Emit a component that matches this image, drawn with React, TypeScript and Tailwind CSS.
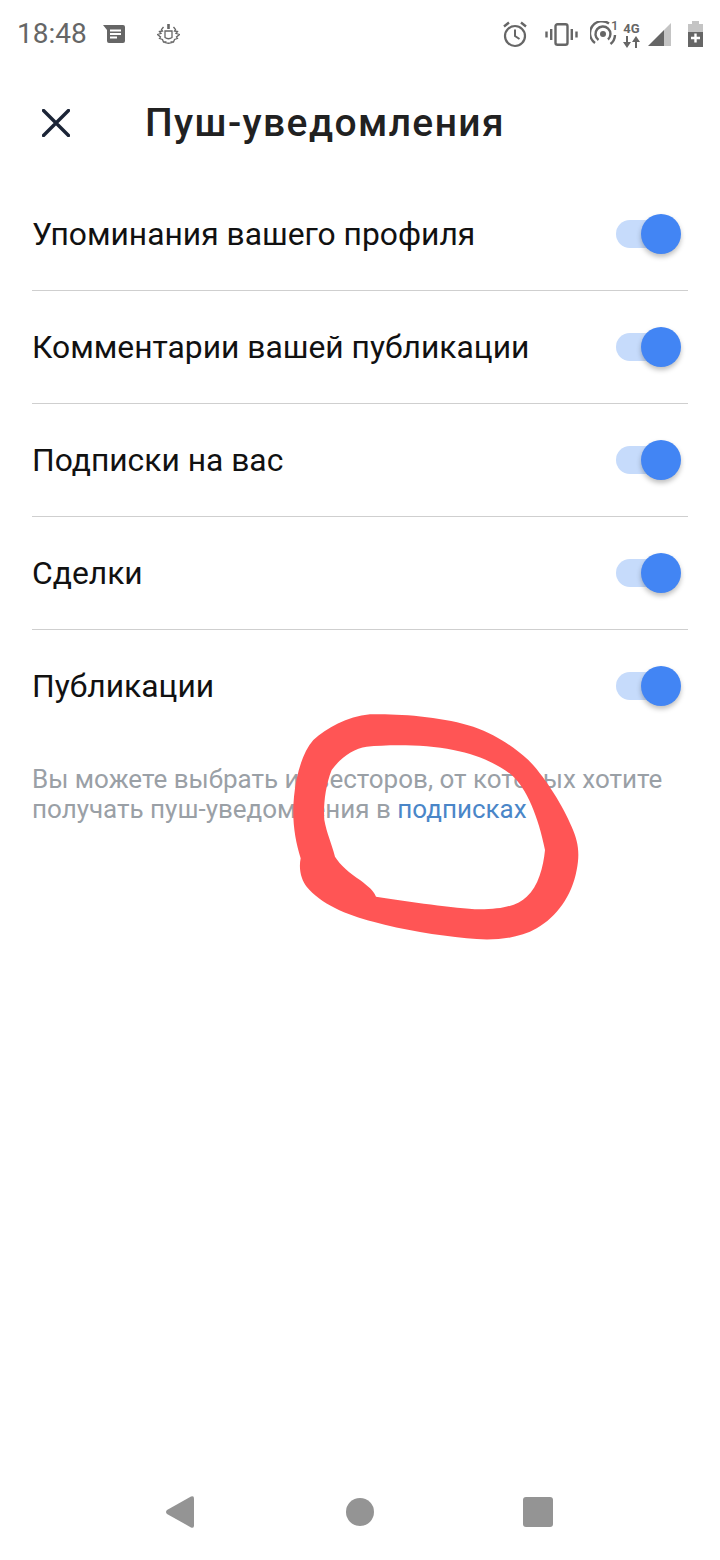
const rows = [
  'Упоминания вашего профиля',
  'Комментарии вашей публикации',
  'Подписки на вас',
  'Сделки',
  'Публикации',
];

const Toggle = () => (
  <div className="flex items-center">
    <div className="h-[28px] w-[50px] rounded-full bg-[#c6dbfb]" />
    <div className="-ml-[25px] h-[40px] w-[40px] rounded-full bg-[#4285f4] shadow-[0_3px_5px_rgba(0,0,0,0.25)]" />
  </div>
);

const StatusBar = () => (
  <div className="flex h-[68px] items-center pl-[17px] pr-[17px] text-[#666666]">
    <span className="w-[86px] text-[28px] leading-none">18:48</span>
    <svg className="-ml-[0px] h-[18px] w-[22px]" viewBox="0 0 22 18" fill="#666666">
      <path d="M0 0H20a2 2 0 0 1 2 2V16a2 2 0 0 1-2 2H6a2 2 0 0 1-2-2V5z" />
      <path d="M7 4.500h11v2H7zM7 8h11v2H7zM7 11.500h7v2H7z" fill="#ffffff" />
    </svg>
    <svg className="ml-[32px] h-[20px] w-[23px]" viewBox="0 0 23 20" fill="none" stroke="#666666" strokeWidth="1.300">
      <path d="M11.500 0v5" strokeWidth="2.600" />
      <path d="M8 7h7v6.500q-3.500 2.500-7 0z" />
      <path d="M6.500 3 4.500 5.500l1 1.500-3 .5 1.500 2-3.500 1 3 2.500-1 1.500 3 1 1 2.500h3" />
      <path d="M16.500 3l2 2.500-1 1.500 3 .5-1.500 2 3.500 1-3 2.500 1 1.500-3 1-1 2.500h-3" />
      <path d="M7.500 18.500q4 1.500 8 0" />
    </svg>
    <div className="ml-auto flex items-center">
      <svg className="h-[27px] w-[24px]" viewBox="0 0 24 27" fill="none" stroke="#666666" strokeWidth="2.200">
        <circle cx="12" cy="15" r="10" />
        <path d="M12 8.500v6.500l4.500 3" strokeWidth="2" />
        <path d="M1 5.500 6 1.500M23 5.500l-5-4" strokeWidth="2.400" />
      </svg>
      <svg className="ml-[18px] h-[23px] w-[33px]" viewBox="0 0 33 23" fill="none" stroke="#666666" strokeWidth="2.400">
        <rect x="10.500" y="1.200" width="12" height="20.600" rx="2" />
        <path d="M6.200 6v11M1.500 8.500v6M26.800 6v11M31.500 8.500v6" />
      </svg>
      <div className="ml-[12px] flex items-start">
        <svg className="h-[26px] w-[27px]" viewBox="0 0 27 26" fill="none" stroke="#666666" strokeWidth="2.400">
          <circle cx="13" cy="13" r="3" fill="#666666" stroke="none" />
          <path d="M8.500 19A7.500 7.500 0 1 1 18 18.500" />
          <path d="M19 2.500A12 12 0 0 0 5 22" />
          <path d="M25 14A12 12 0 0 1 20.500 23" />
        </svg>
        <span className="-ml-[6px] -mt-[3px] w-[6px] text-[13px] font-medium leading-[16px]">1</span>
      </div>
      <div className="ml-[6px] flex w-[17px] flex-col items-center">
        <span className="text-[13px] font-bold leading-[15px]">4G</span>
        <svg className="h-[12px] w-[17px]" viewBox="0 0 17 12" fill="#666666">
          <path d="M3 0h2v6h3l-4 6-4-6h3zM12 12h2V6h3l-4-6-4 6h3z" />
        </svg>
      </div>
      <svg className="ml-[8px] h-[23px] w-[23px]" viewBox="0 0 23 23">
        <path d="M0 23 16 7v16z" fill="#666666" />
        <path d="M16 7 23 0v23h-7z" fill="#c4c4c4" />
      </svg>
      <svg className="ml-[17px] h-[26px] w-[15px]" viewBox="0 0 15 26">
        <path d="M4 0h7v3h4v8H0V3h4z" fill="#c4c4c4" />
        <path d="M0 11h15v15H0z" fill="#666666" />
        <path d="M6.300 12.500h2.400v3.300H12v2.400H8.700v3.300H6.300v-3.300H3v-2.400h3.300z" fill="#ffffff" />
      </svg>
    </div>
  </div>
);

const App = () => {
  return (
    <div className="relative flex h-[1560px] w-[720px] flex-col overflow-hidden bg-white font-['Roboto',sans-serif]">
      <StatusBar />

      <header className="flex h-[110px] items-center pl-[42px]">
        <svg className="h-[28px] w-[28px]" viewBox="0 0 28 28" fill="none" stroke="#1b2436" strokeWidth="3.400" strokeLinecap="round">
          <path d="M1.500 1.500 26.500 26.500M26.500 1.500 1.500 26.500" />
        </svg>
        <h1 className="ml-[75px] text-[39px] font-medium leading-none tracking-[1.4px] text-[#212121]">Пуш-уведомления</h1>
      </header>

      <div className="px-[32px]">
        {rows.map((label, i) => (
          <div
            key={label}
            className={`flex h-[113px] items-center justify-between border-b pr-[7px] ${i < rows.length - 1 ? 'border-[#cfcfcf]' : 'border-transparent'}`}
          >
            <span className="pt-[2px] text-[31.8px] leading-none text-[#111111]">{label}</span>
            <Toggle />
          </div>
        ))}
      </div>

      <p className="px-[32px] pt-[21px] text-[26px] leading-[30px] text-[#9aa0a6]">
        Вы можете выбрать инвесторов, от которых хотите
        <br />
        получать пуш-уведомления в <span className="text-[#4a86c8]">подписках</span>
      </p>

      <nav className="mt-auto flex h-[96px] items-center pl-[166px] pr-[167px]">
        <svg className="h-[32px] w-[28px]" viewBox="0 0 28 32" fill="#949494">
          <path d="M1 14 25 .6Q28-.6 28 2.500V29.500Q28 32.600 25 31.400L1 18Q-1 16 1 14z" />
        </svg>
        <div className="ml-[152px] h-[28px] w-[28px] rounded-full bg-[#949494]" />
        <div className="ml-auto h-[30px] w-[30px] rounded-[3px] bg-[#949494]" />
      </nav>

      {/* red marker scribble on top of the hint text */}
      <svg className="absolute left-[270px] top-[700px] h-[250px] w-[330px]" viewBox="0 0 990 750">
        <path
          fill="#ff5555"
          fillRule="evenodd"
          d="M300 43C380 40 520 50 610 80C680 105 730 140 775 180C825 230 880 320 905 380C925 425 930 460 920 510C905 590 860 650 800 685C740 720 660 722 590 715C500 705 400 690 310 665C230 645 150 610 110 560C95 540 85 510 92 475C75 420 65 360 72 290C78 230 95 160 130 120C170 85 230 50 300 43Z M290 140C360 133 470 133 550 150C620 163 680 190 725 225C770 265 805 350 825 450C820 500 805 560 770 590C745 615 700 628 630 628C550 625 420 605 318 590C310 570 295 560 270 540C240 520 210 495 195 470C185 430 170 400 163 360C160 320 165 260 185 210C210 175 250 145 290 140Z"
        />
      </svg>
    </div>
  );
};

export default App;
